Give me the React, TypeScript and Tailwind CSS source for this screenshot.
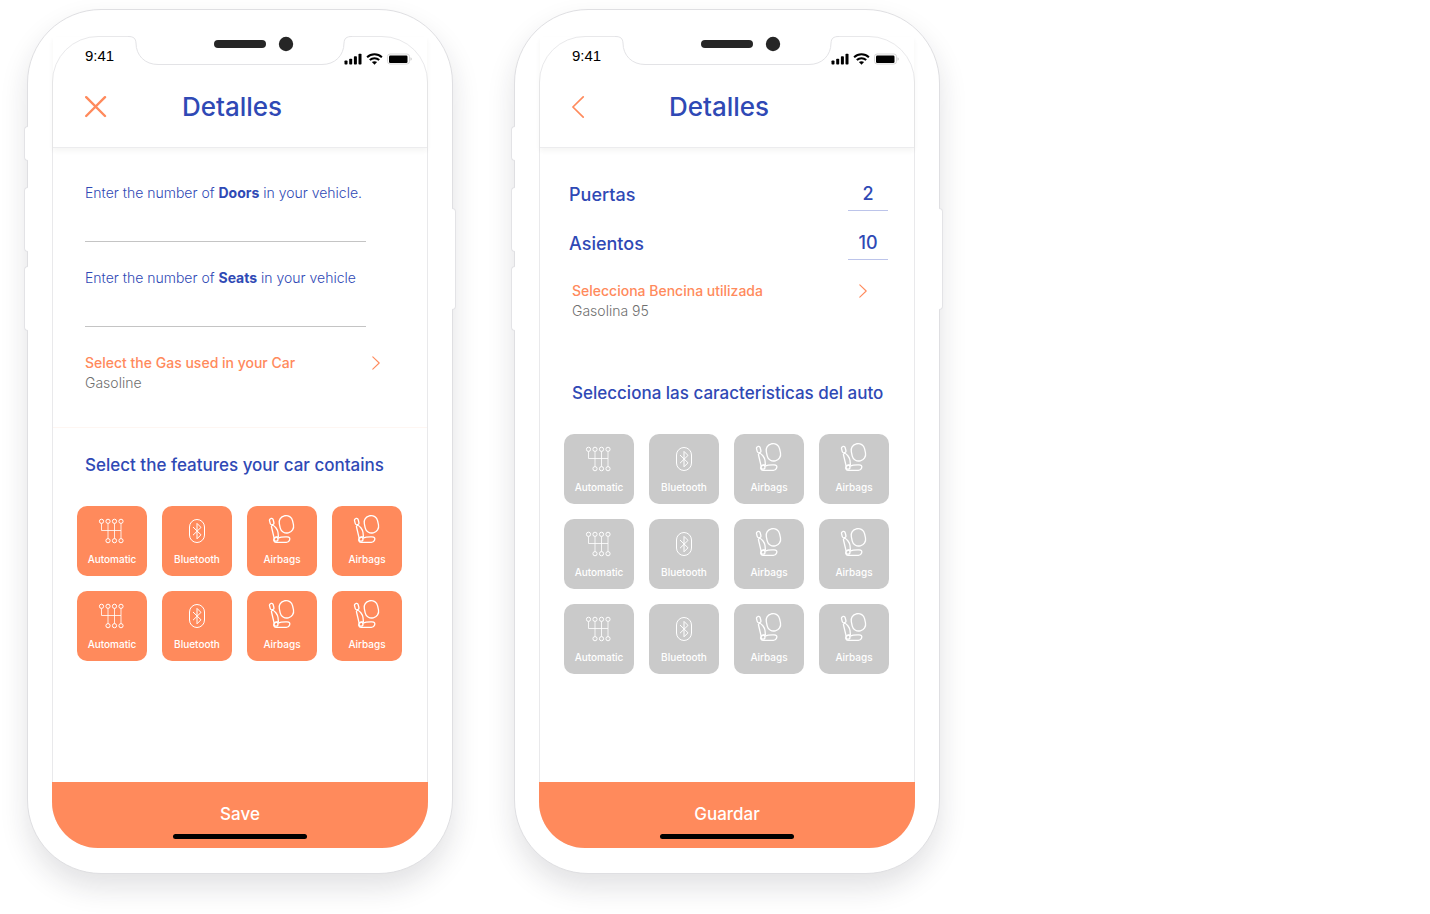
import type { ReactNode } from 'react';

function ShifterIcon() {
  const top = [4.5, 11, 17.5, 24];
  const bottom = [11, 17.5, 24];
  return (
    <svg viewBox="0 0 30 30" className="size-[30px]" fill="none" stroke="currentColor" strokeWidth="1" aria-hidden="true">
      {top.map((x) => (
        <circle key={x} cx={x} cy="7.3" r="2.1" />
      ))}
      {bottom.map((x) => (
        <circle key={x} cx={x} cy="26.7" r="2.1" />
      ))}
      <path d="M4.5 9.4V16.5H24M11 9.4V24.6M17.5 9.4V24.6M24 9.4V24.6" strokeOpacity="0.8" />
    </svg>
  );
}

function BluetoothIcon() {
  return (
    <svg viewBox="0 0 30 30" className="size-[30px]" fill="none" stroke="currentColor" strokeWidth="1" aria-hidden="true">
      <rect x="7.5" y="5.5" width="15" height="23" rx="7.5" />
      <path d="M11 13L19 20.8L15 24.8V9.4L19 13.4L11 21.2" />
    </svg>
  );
}

function AirbagIcon() {
  return (
    <svg viewBox="0 0 30 30" className="size-[30px]" fill="none" stroke="currentColor" strokeWidth="1.3" strokeLinejoin="round" aria-hidden="true">
      <rect x="12.6" y="1.6" width="13.6" height="17.4" rx="6.6" transform="rotate(-12 19.4 10.3)" />
      <rect x="2.8" y="4.4" width="3.8" height="6.4" rx="1.8" transform="rotate(-14 4.7 7.6)" />
      <path d="M5.4 11C8 12 10.6 15.5 11 18.5L11.4 22.8C9.8 22.6 8.6 23.2 7.2 24.4L4.4 12.5Z" />
      <circle cx="9" cy="25.2" r="2" />
      <path d="M10.8 24.2C13.5 23 17 22.8 20 22.9C22.8 23 23.2 24.4 22.6 26C22 27.8 21 28.3 19.4 28.3H9.2C7.4 28.3 6.4 26.8 6.9 25" />
    </svg>
  );
}

function Chevron() {
  return (
    <svg viewBox="0 0 8 14" className="h-[14px] w-2" fill="none" stroke="#ff8a5c" strokeWidth="1.1" strokeLinecap="round" strokeLinejoin="round" aria-hidden="true">
      <path d="M0.8 0.8L7.2 7L0.8 13.2" />
    </svg>
  );
}

function CloseIcon() {
  return (
    <svg viewBox="0 0 22 22" className="size-[22px]" fill="none" stroke="#ff8a5c" strokeWidth="2.4" strokeLinecap="round" aria-hidden="true">
      <path d="M1.2 1.2L20 20M20 1.2L1.2 20" />
    </svg>
  );
}

function BackIcon() {
  return (
    <svg viewBox="0 0 13 22" className="h-[22px] w-[13px]" fill="none" stroke="#ff8a5c" strokeWidth="1.7" strokeLinecap="round" strokeLinejoin="round" aria-hidden="true">
      <path d="M11.2 0.9L0.9 11L11.2 21.1" />
    </svg>
  );
}

function Notch() {
  return (
    <svg viewBox="0 0 224 30" className="absolute -top-px left-1/2 h-[30px] w-56 -translate-x-1/2" aria-hidden="true">
      <path d="M0 0H224V0.5C218 0.5 216.5 2.5 216 7C216 19.5 207 28.5 194 28.5H30C17 28.5 8 19.5 8 7C7.5 2.5 6 0.5 0 0.5Z" fill="#fff" />
      <path d="M0 0.5C6 0.5 7.5 2.5 8 7C8 19.5 17 28.5 30 28.5H194C207 28.5 216 19.5 216 7C216.5 2.5 218 0.5 224 0.5" fill="none" stroke="#e3e3e6" />
      <rect x="86" y="4" width="52" height="8" rx="4" fill="#262626" />
      <circle cx="158" cy="8" r="7.2" fill="#262626" />
    </svg>
  );
}

function StatusIcons() {
  return (
    <svg viewBox="0 0 68 12" className="h-3 w-[68px]" aria-hidden="true">
      <rect x="0.5" y="7.5" width="3" height="4" rx="0.8" />
      <rect x="5.2" y="5.7" width="3" height="5.8" rx="0.8" />
      <rect x="9.9" y="3.2" width="3" height="8.3" rx="0.8" />
      <rect x="14.5" y="0.8" width="3" height="10.7" rx="0.8" />
      <g fill="none" stroke="#000" strokeWidth="2">
        <path d="M23.1 4.2C27.3 0.2 33.7 0.2 37.9 4.2" />
        <path d="M25.8 7C28.5 4.5 32.5 4.5 35.2 7" />
      </g>
      <path d="M27.9 9.1C29.3 7.9 31.7 7.9 33.1 9.1L30.5 11.7Z" />
      <rect x="43.5" y="1" width="22" height="10" rx="2.6" fill="none" stroke="#d8d8d8" />
      <rect x="45" y="2.5" width="18.5" height="7.5" rx="1.2" />
      <path d="M66.7 4.2C67.8 4.8 67.8 7.2 66.7 7.8Z" fill="#aaa" />
    </svg>
  );
}

type PhoneProps = { nav: ReactNode; navLabel: string; action: string; children: ReactNode };

function Phone({ nav, navLabel, action, children }: PhoneProps) {
  return (
    <section className="relative w-full max-w-[426px] rounded-[74px] border border-[#dfdfe2] bg-white px-6 pt-[26px] pb-[25px] shadow-[0_14px_28px_rgba(30,34,50,0.13)]">
      <span className="absolute top-[116px] -left-1 h-[35px] w-1 rounded-l-sm border border-r-0 border-[#e3e3e6] bg-white" />
      <span className="absolute top-[177px] -left-1 h-[65px] w-1 rounded-l-sm border border-r-0 border-[#e3e3e6] bg-white" />
      <span className="absolute top-[256px] -left-1 h-[65px] w-1 rounded-l-sm border border-r-0 border-[#e3e3e6] bg-white" />
      <span className="absolute top-[198px] -right-1 h-[102px] w-1 rounded-r-sm border border-l-0 border-[#e3e3e6] bg-white" />
      <div className="relative flex min-h-[812px] flex-col rounded-[46px] border border-[#e9e9eb]">
        <Notch />
        <header className="flex flex-col border-b border-[#ececee] pb-[22px] shadow-[0_3px_5px_rgba(60,50,40,0.05)]">
          <div className="flex items-start justify-between pt-[11px] pr-[15px] pl-8">
            <span className="font-['Liberation_Sans',Arial,sans-serif] text-[15px] leading-4 text-black">9:41</span>
            <span className="pt-[5px]">
              <StatusIcons />
            </span>
          </div>
          <div className="mt-6 grid h-9 grid-cols-[1fr_auto_1fr] items-center pr-12 pl-8">
            <button type="button" aria-label={navLabel} className="justify-self-start">
              {nav}
            </button>
            <h1 className="text-[26px] leading-9 font-medium">Detalles</h1>
          </div>
        </header>
        <div className="flex flex-1 flex-col">{children}</div>
        <button
          type="button"
          className="-mx-px -mb-px flex h-[66px] flex-col items-center justify-between rounded-b-[46px] bg-[#ff8a5c] pt-5 pb-[9px] text-[17px] leading-6 font-medium text-white"
        >
          {action}
          <span className="h-[5px] w-[134px] rounded-full bg-black" />
        </button>
      </div>
    </section>
  );
}

const FEATURES = [
  { label: 'Automatic', Icon: ShifterIcon },
  { label: 'Bluetooth', Icon: BluetoothIcon },
  { label: 'Airbags', Icon: AirbagIcon },
  { label: 'Airbags', Icon: AirbagIcon },
];

function Features({ rows, active }: { rows: number; active: boolean }) {
  const items = Array.from({ length: rows }, () => FEATURES).flat();
  return (
    <div className="grid grid-cols-[repeat(4,70px)] justify-center gap-[15px] pr-px">
      {items.map(({ label, Icon }, i) => (
        <button
          key={i}
          type="button"
          aria-pressed={active}
          className={`flex h-[70px] flex-col items-center gap-[7px] rounded-[10px] pt-2 text-[10px] leading-4 font-medium text-white ${active ? 'bg-[#ff8a5c]' : 'bg-[#cacaca]'}`}
        >
          <Icon />
          {label}
        </button>
      ))}
    </div>
  );
}

function FuelRow({ title, value }: { title: string; value: string }) {
  return (
    <button type="button" className="flex items-start justify-between pr-[47px] pl-8 text-left text-sm leading-5">
      <span className="flex flex-col">
        <span className="font-medium text-[#ff8a5c]">{title}</span>
        <span className="font-light text-[#6f6f6f]">{value}</span>
      </span>
      <span className="pt-[3px]">
        <Chevron />
      </span>
    </button>
  );
}

function EntryField({ id, name, end }: { id: string; name: string; end: string }) {
  return (
    <div className="flex h-[85px] flex-col pr-[61px] pl-8">
      <label htmlFor={id} className="text-sm leading-5 font-light">
        Enter the number of <b className="font-bold">{name}</b> {end}
      </label>
      <input id={id} inputMode="numeric" className="h-[39px] w-full border-b border-[#c4c4c4] bg-transparent text-sm outline-none" />
    </div>
  );
}

function NumberField({ id, name, value }: { id: string; name: string; value: string }) {
  return (
    <div className="flex h-[49px] items-start justify-between pr-[26px] pl-[29px] text-lg leading-[34px] font-medium">
      <label htmlFor={id}>{name}</label>
      <input id={id} inputMode="numeric" defaultValue={value} className="h-[33px] w-10 border-b border-[#bcc4ea] bg-transparent text-center outline-none" />
    </div>
  );
}

export default function App() {
  return (
    <main className="flex flex-wrap gap-x-[61px] gap-y-12 overflow-hidden bg-white px-[27px] pt-[9px] pb-10 font-['Inter','Noto_Sans',sans-serif] text-[#2f49b5]">
      <Phone nav={<CloseIcon />} navLabel="Close" action="Save">
        <div className="pt-[35px]">
          <EntryField id="doors" name="Doors" end="in your vehicle." />
          <EntryField id="seats" name="Seats" end="in your vehicle" />
        </div>
        <div className="flex h-[75px] flex-col border-b border-[#fef6f2]">
          <FuelRow title="Select the Gas used in your Car" value="Gasoline" />
        </div>
        <h2 className="pt-[25px] pb-[29px] pl-8 text-[17px] leading-6 font-medium">Select the features your car contains</h2>
        <Features rows={2} active />
      </Phone>
      <Phone nav={<BackIcon />} navLabel="Volver" action="Guardar">
        <div className="pt-[30px] pb-[5px]">
          <NumberField id="puertas" name="Puertas" value="2" />
          <NumberField id="asientos" name="Asientos" value="10" />
        </div>
        <FuelRow title="Selecciona Bencina utilizada" value="Gasolina 95" />
        <h2 className="pt-[60px] pb-[29px] pl-8 text-[17px] leading-6 font-medium">Selecciona las caracteristicas del auto</h2>
        <Features rows={3} active={false} />
      </Phone>
    </main>
  );
}
